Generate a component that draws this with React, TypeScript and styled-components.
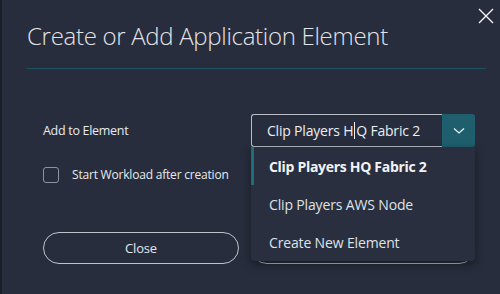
import React from 'react';
import styled, { createGlobalStyle } from 'styled-components';

const GlobalStyle = createGlobalStyle`
  html, body {
    margin: 0;
    padding: 0;
    background: #1b1f29;
  }
  body {
    font-family: "Open Sans", "Noto Sans", sans-serif;
    color: #e6e8ec;
  }
`;

const Dialog = styled.div`
  position: relative;
  margin-left: 2px;
  width: 498px;
  height: 294px;
  box-sizing: border-box;
  background: #272d3c;
  padding: 20px 14px 0 25px;
  display: flex;
  flex-direction: column;
  overflow: hidden;
`;

const Title = styled.h1`
  margin: 0;
  font-size: 24px;
  line-height: 32px;
  font-weight: 300;
  letter-spacing: -0.3px;
  color: #e2e4e8;
`;

const CloseX = styled.button`
  position: absolute;
  top: 6px;
  right: 4px;
  width: 20px;
  height: 20px;
  padding: 0;
  border: none;
  background: transparent;
  display: flex;
  align-items: center;
  justify-content: center;
  cursor: pointer;
`;

const Divider = styled.div`
  margin-top: 16px;
  border-top: 1px solid #1d5361;
`;

const Form = styled.div`
  margin-top: 45px;
  padding-left: 16px;
  display: grid;
  grid-template-columns: 196px 224px;
  column-gap: 12px;
`;

const Label = styled.div`
  align-self: center;
  font-size: 12.5px;
  letter-spacing: -0.3px;
  color: #e8eaee;
`;

const SelectWrap = styled.div`
  position: relative;
  display: flex;
  height: 33px;
`;

const Input = styled.div`
  flex: 1;
  box-sizing: border-box;
  border: 1px solid #b9bdc5;
  border-right: none;
  border-radius: 3px 0 0 3px;
  padding-left: 15px;
  display: flex;
  align-items: center;
  font-size: 14px;
  letter-spacing: -0.2px;
  color: #eceef2;
  white-space: pre;
`;

const Caret = styled.span`
  display: inline-block;
  width: 0;
  height: 17px;
  border-left: 1px solid #f0f0f0;
  margin: 0 1px;
`;

const DropButton = styled.div`
  width: 33px;
  background: #1f5f6d;
  border-radius: 0 3px 3px 0;
  display: flex;
  align-items: center;
  justify-content: center;
`;

const Menu = styled.ul`
  position: absolute;
  top: 100%;
  left: 0;
  right: 0;
  margin: 0;
  padding: 0;
  list-style: none;
  background: #292f3f;
  border-radius: 0 0 4px 4px;
  box-shadow: 0 3px 8px rgba(10, 12, 18, 0.55);
  z-index: 2;
`;

const Item = styled.li<{ $active?: boolean }>`
  height: 38px;
  display: flex;
  align-items: center;
  padding-left: 18px;
  font-size: 14px;
  letter-spacing: ${(p) => (p.$active ? '-0.3px' : '-0.15px')};
  font-weight: ${(p) => (p.$active ? 700 : 400)};
  color: ${(p) => (p.$active ? '#f2f3f5' : '#dfe2e7')};
  box-shadow: ${(p) => (p.$active ? 'inset 3px 0 0 #1f6c7a' : 'none')};
`;

const CheckRow = styled.label`
  margin-top: 19px;
  grid-column: 1 / 2;
  display: flex;
  align-items: center;
  gap: 13px;
  font-size: 12px;
  letter-spacing: -0.2px;
  color: #e8eaee;
  white-space: nowrap;
`;

const Box = styled.span`
  flex: none;
  width: 16px;
  height: 16px;
  box-sizing: border-box;
  border: 1px solid #8d939e;
  border-radius: 3px;
`;

const Button = styled.button`
  margin-top: 49px;
  height: 32px;
  box-sizing: border-box;
  border: 1px solid #bfc3ca;
  border-radius: 16px;
  background: transparent;
  color: #e6e8ec;
  font-family: inherit;
  font-size: 13px;
  letter-spacing: -0.2px;
`;

function Chevron() {
  return (
    <svg width="12" height="8" viewBox="0 0 12 8">
      <path d="M1 1.5 L6 6 L11 1.5" fill="none" stroke="#e8eef0" strokeWidth="1.3" />
    </svg>
  );
}

export default function App() {
  return (
    <Dialog>
      <GlobalStyle />
      <Title>Create or Add Application Element</Title>
      <CloseX aria-label="close">
        <svg width="18" height="18" viewBox="0 0 18 18">
          <path d="M2 2 L16 16 M16 2 L2 16" stroke="#f4f5f7" strokeWidth="1.4" />
        </svg>
      </CloseX>
      <Divider />
      <Form>
        <Label>Add to Element</Label>
        <SelectWrap>
          <Input>
            Clip Players H<Caret />Q Fabric 2
          </Input>
          <DropButton>
            <Chevron />
          </DropButton>
          <Menu>
            <Item $active>Clip Players HQ Fabric 2</Item>
            <Item>Clip Players AWS Node</Item>
            <Item>Create New Element</Item>
          </Menu>
        </SelectWrap>
        <CheckRow>
          <Box />
          Start Workload after creation
        </CheckRow>
        <div />
        <Button>Close</Button>
        <Button aria-label="Create" />
      </Form>
    </Dialog>
  );
}
